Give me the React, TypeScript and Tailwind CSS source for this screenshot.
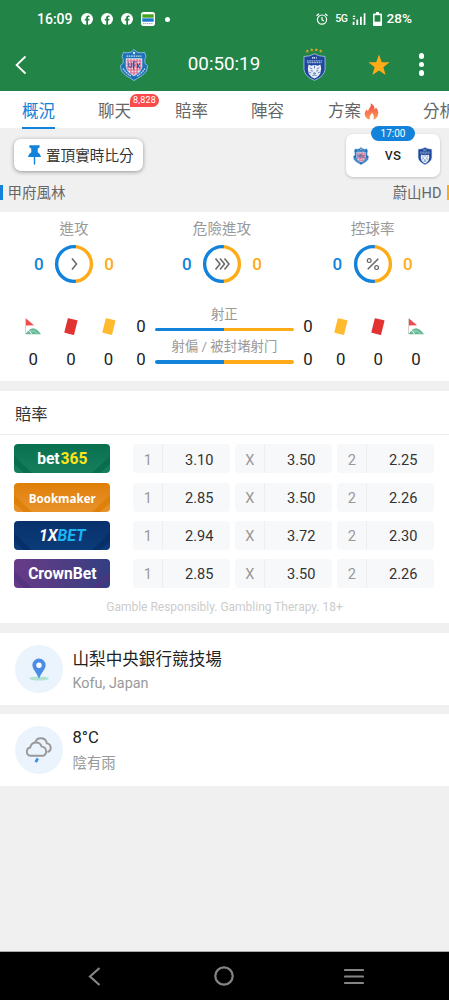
import type { ReactNode } from 'react';
import clsx from 'clsx';

type BadgeProps = { className?: string };

interface Stat {
  label: string;
  home: number;
  away: number;
  icon: ReactNode;
  className?: string;
}

interface Bookmaker {
  id: string;
  logo: ReactNode;
  logoClass: string;
  stripe: string;
  odds: [string, string, string];
}

const KofuBadge = ({ className }: BadgeProps) => (
  <svg viewBox="0 0 28 32" className={className}>
    <path
      d="M14 0.5 17 3.2Q21 4.6 24.5 3.2L26 7.5Q24 10 25 14.5L27.6 16.5 26.5 22Q23 27 17.5 29.3L14 31.6 10.5 29.3Q5 27 1.5 22L0.4 16.5 3 14.5Q4 10 2 7.5L3.5 3.2Q7 4.6 11 3.2Z"
      fill="#1f70b8"
      stroke="#8fc0e6"
      strokeWidth="0.9"
    />
    <path d="M6 9.5H22V18Q21 23.5 14 27 7 23.5 6 18Z" fill="#f4e4ec" stroke="#b5d4ec" strokeWidth="0.7" />
    <path
      d="M8 10V21M11 10V24M14 10V26M17 10V24M20 10V21M6.5 12H21.5M6.5 15H21.5M6.5 18H21.5M8 21H20M10 24H18"
      stroke="#d9406a"
      strokeWidth="1.1"
      opacity="0.8"
    />
    <path d="M8.8 13.5V17Q10.3 19.5 11.8 17V13.5M13.5 20.5V13H16.5M13.5 16.2H15.8M17.5 14.5V19.5M20 14.5 18 17 20 19.5" fill="none" stroke="#1e5ca5" strokeWidth="1.1" />
    <path d="M6.5 7.2H21.5M3.2 19.5Q6 24.5 11 27M24.8 19.5Q22 24.5 17 27" fill="none" stroke="#c4def2" strokeWidth="1.3" strokeDasharray="1.6 0.7" />
    <circle cx="14" cy="4" r="1.2" fill="#dceaf6" />
  </svg>
);

const UlsanShield = ({ className }: BadgeProps) => (
  <svg viewBox="0 0 24 29" className={className}>
    <path d="M1 3.5Q7 3.6 12 0.7 17 3.6 23 3.5V17Q22 24.5 12 28.5 2 24.5 1 17Z" fill="#1d479d" stroke="#b9cbe8" strokeWidth="0.8" />
    <path d="M10 4V6M12 4V6M14 4V6M10 5H12M4 8.2H20M4.5 10H19.5" stroke="#dbe5f5" strokeWidth="0.9" strokeDasharray="1.8 0.6" />
    <path d="M5.8 12 8.5 13.2Q12 11.8 15.5 13.2L18.2 12 19 16 18 21.5 15 25 12 26.5 9 25 6 21.5 5 16Z" fill="#e9eef7" />
    <path
      d="M7 15.2 9.6 16.6M17 15.2 14.4 16.6M8 18.2 10.3 18.8M16 18.2 13.7 18.8M12 13V16M6.5 20 8.6 20.8M17.5 20 15.4 20.8M10.8 20.8H13.2L12 22ZM9.8 23.4 12 22.9 14.2 23.4"
      fill="none"
      stroke="#1d479d"
      strokeWidth="0.7"
    />
  </svg>
);

const FacebookDot = () => (
  <svg viewBox="0 0 12 12" className="size-3">
    <circle cx="6" cy="6" r="6" fill="#fff" />
    <path d="M5.2 12V7.5H3.8V5.8H5.2V4.7C5.2 3 6.1 2.3 8.5 2.6V4.1C7.3 4 7 4.2 7 5V5.8H8.5L8.2 7.5H7V12Z" fill="#238447" />
  </svg>
);

const StatusBar = () => (
  <div className="flex h-[38px] items-center justify-between pr-[37px] pl-[37px] text-white">
    <div className="flex items-center">
      <span className="w-[44px] text-[14px] leading-none font-medium">16:09</span>
      <div className="flex items-center gap-2">
        <FacebookDot />
        <FacebookDot />
        <FacebookDot />
        <svg viewBox="0 0 14 14" className="size-[14px]">
          <rect width="14" height="14" rx="2.5" fill="#fff" />
          <path d="M1.3 2.3H12.7V5.7H1.3Z" fill="#45a41c" />
          <path d="M1.3 6.3H12.7V9.7H1.3Z" fill="#1779cf" />
          <path d="M2 11.6H12" stroke="#9aa" strokeDasharray="1.3 0.6" />
        </svg>
      </div>
      <span className="ml-[10px] size-[5px] rounded-full bg-white" />
    </div>
    <div className="flex items-center">
      <svg viewBox="0 0 12 12" className="mr-px size-3" fill="none" stroke="#fff" strokeWidth="1.2">
        <circle cx="6" cy="6.6" r="4.6" />
        <path d="M6 4V6.8L7.8 8M0.5 2.8 3 0.7M11.5 2.8 9 0.7" />
      </svg>
      <span className="ml-[6px] text-[10.5px] leading-none font-medium tracking-[-0.4px]">5G</span>
      <svg viewBox="0 0 14 12" className="ml-1 h-3 w-[14px]" fill="#fff">
        <path d="M0.5 4 2 2 3.5 4ZM0.5 5 2 7 3.5 5ZM0.7 8.7H2.5V12H0.7ZM4.4 6.5H6.2V12H4.4ZM8 3.7H9.8V12H8ZM11.7 0.3H13.4V12H11.7Z" />
      </svg>
      <svg viewBox="0 0 9 14" className="ml-[7px] h-[14px] w-[9px]">
        <path d="M3 0H6V1.5H8Q9 1.5 9 2.5V13Q9 14 8 14H1Q0 14 0 13V2.5Q0 1.5 1 1.5H3Z" fill="#fff" />
        <path d="M1.6 3.2H7.4V9.7H1.6Z" fill="#238447" />
      </svg>
      <span className="ml-[5px] text-[13.6px] leading-none font-medium">28%</span>
    </div>
  </div>
);

const MatchHeader = () => (
  <div className="flex h-[53px] items-center pl-[15px] text-white">
    <svg viewBox="0 0 12 20" className="h-5 w-3" fill="none" stroke="#fff" strokeWidth="1.8">
      <path d="M10.5 1.5 1.6 10 10.5 18.5" />
    </svg>
    <KofuBadge className="ml-[93px] h-8 w-7" />
    <span className="ml-9 w-[80px] text-center text-[18.8px] leading-none">00:50:19</span>
    <div className="ml-[38px] flex w-6 flex-col items-center">
      <svg viewBox="0 0 24 6" className="h-[5px] w-6" fill="#e5ac25">
        <path d="M4 1.5 4.6 3H6.2L5 4 5.4 5.6 4 4.7 2.6 5.6 3 4 1.8 3H3.4ZM9.3 0 9.9 1.5H11.5L10.3 2.5 10.7 4.1 9.3 3.2 7.9 4.1 8.3 2.5 7.1 1.5H8.7ZM14.7 0 15.3 1.5H16.9L15.7 2.5 16.1 4.1 14.7 3.2 13.3 4.1 13.7 2.5 12.5 1.5H14.1ZM20 1.5 20.6 3H22.2L21 4 21.4 5.6 20 4.7 18.6 5.6 19 4 17.8 3H19.4Z" />
      </svg>
      <UlsanShield className="h-[28px] w-[23px]" />
    </div>
    <svg viewBox="0 0 24 24" className="ml-[41.5px] h-[22px] w-[22px]" fill="#ffab17">
      <path d="M12 .6 15 8.9 23.5 9.1 16.8 14.4 19.2 22.9 12 17.9 4.8 22.9 7.2 14.4 .5 9.1 9 8.9Z" />
    </svg>
    <div className="ml-[29px] flex flex-col gap-[3px]">
      <span className="size-[5.4px] rounded-full bg-white" />
      <span className="size-[5.4px] rounded-full bg-white" />
      <span className="size-[5.4px] rounded-full bg-white" />
    </div>
  </div>
);

const Flame = () => (
  <svg viewBox="0 0 15 17" className="mb-[2px] h-[17px] w-[15px]">
    <defs>
      <linearGradient id="flame" x1="0" y1="0" x2="0" y2="1">
        <stop offset="0" stopColor="#f24c48" />
        <stop offset="1" stopColor="#ff9a55" />
      </linearGradient>
    </defs>
    <path
      d="M6.7 0.3C10 2 10.8 4.4 10.5 6.5 11.5 6 11.8 5.2 11.7 4.2 14 6.4 14.8 9 14 11.8 13.2 14.7 11.5 16 9.2 16.6 10.4 14.4 9.9 11.5 7.8 9.5 7.7 11.3 5.8 12 5.6 14 5.5 15.2 5.8 16 6.2 16.6 2.8 16 .6 13.7 .7 10.7 .8 8.8 1.8 7.3 3 6.2 3 7.2 3.3 8 4 8.5 4.5 5.4 7.6 4 6.7.3Z"
      fill="url(#flame)"
    />
  </svg>
);

const Tabs = () => (
  <nav className="flex h-[37px] bg-white pl-[22px] text-[16.5px] leading-[42px] whitespace-nowrap text-[#666]">
    <div className="relative z-10 w-[33px] text-[#1282da]">
      概況
      <span className="absolute top-[35.5px] left-0 h-[2.5px] w-full bg-[#1282da]" />
    </div>
    <div className="relative ml-[43px] w-[33px]">
      聊天
      <span className="absolute top-[2.5px] left-[32px] flex h-[13.5px] w-[29px] items-center justify-center rounded-full rounded-bl-none bg-[#fb4a4c] text-[9px] leading-none tracking-[0.2px] text-white">
        8,828
      </span>
    </div>
    <div className="ml-[44px] w-[33px]">賠率</div>
    <div className="ml-[43px] w-[33px]">陣容</div>
    <div className="ml-[44px] flex h-[42px] w-[52px] items-center gap-[3px]">
      方案
      <Flame />
    </div>
    <div className="ml-[43px] w-[26px]">分析</div>
  </nav>
);

const PinnedMatch = () => (
  <section className="h-[84px] pt-[6px]">
    <div className="flex h-[43px] items-start justify-between pr-[9px] pl-[14px]">
      <button
        type="button"
        className="mt-[5px] flex h-8 w-[129px] items-center rounded-[7px] bg-white pl-[14px] text-[14.6px] whitespace-nowrap text-[#333] shadow-[0_1px_4px_rgba(0,0,0,0.38)]"
      >
        <svg viewBox="0 0 13 20" className="mr-[5px] h-5 w-[13px] shrink-0" fill="#1282da">
          <path d="M1.4 0.3H11.6V2.2L9.7 3.8V7.2Q12.6 8.7 13 12H7.2V19L6.5 20 5.8 19V12H0Q0.4 8.7 3.3 7.2V3.8L1.4 2.2Z" />
        </svg>
        <span className="pt-[4px]">置頂實時比分</span>
      </button>
      <div className="relative flex h-[43px] w-[94px] items-center rounded-[7px] bg-white px-[7px] shadow-[0_1px_3px_rgba(0,0,0,0.2)]">
        <KofuBadge className="h-[18px] w-4" />
        <span className="flex-1 text-center text-[16.6px] leading-none text-[#222]">vs</span>
        <UlsanShield className="h-[18px] w-[16px]" />
        <span className="absolute -top-[8px] left-[25px] flex h-[15px] w-[44px] items-center justify-center rounded-full bg-[#1282da] text-[10px] leading-none text-white">
          17:00
        </span>
      </div>
    </div>
    <div className="mt-[6px] flex h-[18px] items-center text-[14.5px] text-[#666]">
      <span className="mr-[5px] h-[15px] w-[2.5px] bg-[#1282da]" />
      <span className="flex-1 pt-[3px]">甲府風林</span>
      <span className="mr-[5px] pt-[3px]">蔚山HD</span>
      <span className="h-[15px] w-[2.5px] bg-[#ffab17]" />
    </div>
  </section>
);

const Ring = ({ children }: { children: ReactNode }) => (
  <svg viewBox="0 0 40 40" className="-mt-px size-10 shrink-0" fill="none">
    <path d="M20 2.6A17.4 17.4 0 0 0 20 37.4" stroke="#1282da" strokeWidth="3.4" />
    <path d="M20 37.4A17.4 17.4 0 0 0 20 2.6" stroke="#ffab17" strokeWidth="3.4" />
    <path d="M20 .9H21.8V4.3H20ZM20 35.7H21.8V39.1H20Z" fill="#1282da" />
    <g stroke="#666" strokeWidth="1.5">
      {children}
    </g>
  </svg>
);

const stats: Stat[] = [
  { label: '進攻', home: 0, away: 0, icon: <path d="M18 14.5 22.5 20 18 25.5" /> },
  {
    label: '危險進攻',
    home: 0,
    away: 0,
    icon: <path d="M13.5 14.5 18 20 13.5 25.5M18 14.5 22.5 20 18 25.5M22.5 14.5 27 20 22.5 25.5" />,
    className: 'ml-[48px]',
  },
  {
    label: '控球率',
    home: 0,
    away: 0,
    icon: (
      <>
        <path d="M25.3 14.7 14.7 25.3" />
        <circle cx="16.2" cy="16.6" r="1.9" strokeWidth="1.2" />
        <circle cx="23.6" cy="23.6" r="1.9" strokeWidth="1.2" />
      </>
    ),
    className: 'ml-[50.6px]',
  },
];

const StatRing = ({ label, home, away, icon, className }: Stat) => (
  <div className={clsx('w-[100px] text-center', className)}>
    <div className="h-[18px] text-[14.6px] leading-[18px] text-[#999]">{label}</div>
    <div className="mt-[7px] flex items-center justify-between px-[10px] text-[17px] leading-none font-medium">
      <span className="text-[#1282da]">{home}</span>
      <Ring>{icon}</Ring>
      <span className="text-[#ffab17]">{away}</span>
    </div>
  </div>
);

const CornerFlag = () => (
  <svg viewBox="0 0 16 17" className="h-[17px] w-4">
    <path d="M.5 0.5V16" stroke="#d7cfd0" strokeWidth="1" />
    <path d="M1 .5 9 7.3 1 7.5Z" fill="#f2494d" />
    <path d="M.5 16.3Q4 10.5 8.3 10.3 12.5 11 16 16.3Z" fill="#63b996" />
    <path d="M2 12.3Q5.5 12.5 6.5 16" fill="none" stroke="#fff" strokeWidth="1" />
    <path d="M5.5 13Q10 12 12.5 15.8" fill="none" stroke="#b8e0ce" strokeWidth=".8" />
  </svg>
);

const Card = ({ className }: BadgeProps) => <span className={clsx('block h-[14.5px] w-[9.8px] rotate-[14deg] rounded-[0.5px]', className)} />;

const CountColumn = ({ icon, value }: { icon: ReactNode; value: number }) => (
  <div className="flex w-[37.6px] flex-col items-center">
    <div className="flex h-5 items-center">{icon}</div>
    <span className="mt-[13px] leading-5">{value}</span>
  </div>
);

const ShotBar = ({ label }: { label: string }) => (
  <div className="h-[32.5px]">
    <div className="h-[22px] text-center text-[13.4px] leading-[17px] text-[#999]">{label}</div>
    <div className="flex h-[3.5px] overflow-hidden rounded-full">
      <span className="w-1/2 bg-[#1282da]" />
      <span className="w-1/2 bg-[#ffab17]" />
    </div>
  </div>
);

const StatsPanel = () => (
  <section className="h-[169px] bg-white pt-[8px]">
    <div className="flex pl-[24px]">
      {stats.map((stat) => (
        <StatRing key={stat.label} {...stat} />
      ))}
    </div>
    <div className="mt-[32px] flex pl-[14.5px] text-[16.8px] text-[#222]">
      <CountColumn icon={<CornerFlag />} value={0} />
      <CountColumn icon={<Card className="bg-[#e23333]" />} value={0} />
      <CountColumn icon={<Card className="bg-[#ffbb2d]" />} value={0} />
      <div className="flex w-[27.6px] flex-col items-center gap-[13px] leading-5">
        <span>0</span>
        <span>0</span>
      </div>
      <div className="-mt-[10.5px] w-[139px]">
        <ShotBar label="射正" />
        <ShotBar label="射偏 / 被封堵射门" />
      </div>
      <div className="flex w-[28px] flex-col items-center gap-[13px] leading-5">
        <span>0</span>
        <span>0</span>
      </div>
      <CountColumn icon={<Card className="bg-[#ffbb2d]" />} value={0} />
      <CountColumn icon={<Card className="bg-[#e23333]" />} value={0} />
      <CountColumn icon={<CornerFlag />} value={0} />
    </div>
  </section>
);

const bookmakers: Bookmaker[] = [
  {
    id: 'bet365',
    logo: (
      <span className="text-[15.6px] font-bold">
        bet<span className="ml-px text-[#ffe418]">365</span>
      </span>
    ),
    logoClass: 'bg-linear-to-b from-[#08704f] to-[#17805d]',
    stripe: '#04694a',
    odds: ['3.10', '3.50', '2.25'],
  },
  {
    id: 'bookmaker',
    logo: <span className="font-['Open_Sans','Liberation_Sans',sans-serif] text-[11.6px] font-bold">Bookmaker</span>,
    logoClass: 'bg-linear-to-b from-[#df7f03] to-[#e8932b]',
    stripe: '#dd7b00',
    odds: ['2.85', '3.50', '2.26'],
  },
  {
    id: '1xbet',
    logo: (
      <span className="text-[15.8px] font-bold italic">
        1X<span className="text-[#1bb5f5]">BET</span>
      </span>
    ),
    logoClass: 'bg-linear-to-b from-[#08316b] to-[#0c3d7b]',
    stripe: '#062c65',
    odds: ['2.94', '3.72', '2.30'],
  },
  {
    id: 'crownbet',
    logo: <span className="text-[15.6px] font-bold">CrownBet</span>,
    logoClass: 'bg-linear-to-r from-[#693a87] to-[#333f82]',
    stripe: '#50347e',
    odds: ['2.85', '3.50', '2.26'],
  },
];

const outcomes = ['1', 'X', '2'];

const OddsRow = ({ logo, logoClass, stripe, odds }: Bookmaker) => (
  <div className="flex h-[38.3px] items-start">
    <div className={clsx('relative flex h-[29px] w-24 items-center justify-center overflow-hidden rounded-[4px] text-white', logoClass)}>
      <svg viewBox="0 0 96 29" className="absolute inset-0" fill={stripe} opacity="0.7">
        <path d="M0 12V20L10 29H18ZM96 12V20L86 29H78Z" />
      </svg>
      <span className="relative pt-px leading-none">{logo}</span>
    </div>
    <div className="ml-[23px] flex gap-[5px]">
      {outcomes.map((outcome, i) => (
        <div key={outcome} className="flex h-[29px] w-[97px] items-center rounded-[4px] bg-[#f7f8fa] text-[14.6px] leading-none">
          <span className="flex h-full w-[30px] items-center justify-center border-r border-[#eceef0] pt-[2px] text-[#999]">{outcome}</span>
          <span className="flex-1 pt-[2px] pl-[5px] text-center text-[#333]">{odds[i]}</span>
        </div>
      ))}
    </div>
  </div>
);

const OddsPanel = () => (
  <section className="mt-[10px] h-[232px] bg-white">
    <h2 className="h-[44px] border-b border-[#ececec] pl-[15px] text-[16.3px] leading-[47px] text-[#333]">賠率</h2>
    <div className="pt-[9.4px] pl-[14.3px]">
      {bookmakers.map((bookmaker) => (
        <OddsRow key={bookmaker.id} {...bookmaker} />
      ))}
    </div>
    <p className="text-center text-[12px] leading-[18px] tracking-[-0.01px] text-[#ccc]">Gamble Responsibly. Gambling Therapy. 18+</p>
  </section>
);

interface InfoRowProps {
  icon: ReactNode;
  title: string;
  subtitle: string;
  className: string;
  textClass: string;
}

const InfoRow = ({ icon, title, subtitle, className, textClass }: InfoRowProps) => (
  <section className={clsx('flex h-[72px] items-center bg-white pl-[14.5px]', className)}>
    <div className="flex size-[48px] items-center justify-center rounded-full bg-[#ebf4fc]">{icon}</div>
    <div className={clsx('ml-[10px] flex flex-col', textClass)}>
      <div className="text-[16.6px] leading-[25px] text-[#222]">{title}</div>
      <div className="text-[14.4px] leading-[24px] text-[#999]">{subtitle}</div>
    </div>
  </section>
);

const PinIcon = () => (
  <svg viewBox="0 0 20 23" className="h-[23px] w-5">
    <ellipse cx="10" cy="20.5" rx="10" ry="2" fill="#b4e2d2" />
    <path d="M10 .5A6.6 6.6 0 0 1 16.6 7.2C16.6 11.5 12 14.5 10 20.8 8 14.5 3.4 11.5 3.4 7.2A6.6 6.6 0 0 1 10 .5Z" fill="#4a8de6" />
    <circle cx="10" cy="7.3" r="2.7" fill="#fff" />
  </svg>
);

const RainIcon = () => (
  <svg viewBox="0 0 28 26" className="h-[26px] w-7" fill="none" stroke="#999" strokeWidth="1.9" strokeLinejoin="round">
    <path d="M5.5 18.8A4.2 4.2 0 0 1 5.3 10.5 5.8 5.8 0 0 1 16.6 9.6 4.8 4.8 0 0 1 18.2 18.8Z" />
    <path d="M10.3 5A6 6 0 0 1 21.8 6.4 4.4 4.4 0 0 1 22.5 15" />
    <path d="M12.8 21.5 10.7 25.2" stroke="#3b8bea" strokeWidth="2.6" />
  </svg>
);

const SystemNav = () => (
  <footer className="flex h-[49px] items-center justify-between border-t border-[#aaa] bg-black pr-[85.5px] pl-[88px]">
    <svg viewBox="0 0 12 19" className="h-[19px] w-3" fill="none" stroke="#858585" strokeWidth="2.2">
      <path d="M11.5 1 2 9.5 11.5 18" />
    </svg>
    <svg viewBox="0 0 20 20" className="mr-[-5px] size-5" fill="none" stroke="#858585" strokeWidth="2.2">
      <circle cx="10" cy="10" r="8.7" />
    </svg>
    <svg viewBox="0 0 20 18" className="h-[18px] w-5" stroke="#858585" strokeWidth="2.2" strokeLinecap="round">
      <path d="M1 3H19M1 9.5H19M1 16H19" />
    </svg>
  </footer>
);

export default function App() {
  return (
    <div className="flex h-[1000px] w-[449px] flex-col overflow-hidden bg-[#f0f0f0] font-[Roboto,'Noto_Sans_CJK_TC','Noto_Sans_CJK_SC',sans-serif]">
      <header className="h-[91px] bg-[#238447]">
        <StatusBar />
        <MatchHeader />
      </header>
      <Tabs />
      <PinnedMatch />
      <StatsPanel />
      <OddsPanel />
      <InfoRow icon={<PinIcon />} title="山梨中央銀行競技場" subtitle="Kofu, Japan" className="mt-[10px]" textClass="pt-[5px]" />
      <InfoRow icon={<RainIcon />} title="8°C" subtitle="陰有雨" className="mt-[9px]" textClass="gap-[2px] pt-px" />
      <div className="flex-1" />
      <SystemNav />
    </div>
  );
}
